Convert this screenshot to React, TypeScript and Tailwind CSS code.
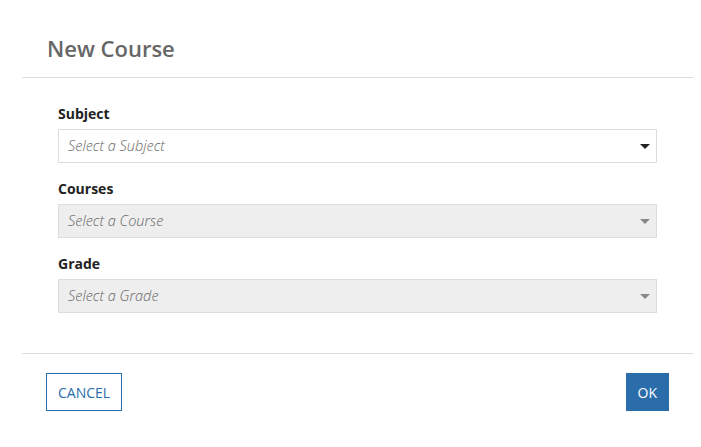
import React from "react";

function Caret({ disabled }: { disabled?: boolean }) {
  return (
    <span
      className={
        "absolute right-[6px] top-[14px] h-0 w-0 border-x-[5px] border-t-[5px] border-x-transparent " +
        (disabled ? "border-t-[#888]" : "border-t-[#222]")
      }
    />
  );
}

function Field({
  label,
  placeholder,
  disabled,
}: {
  label: string;
  placeholder: string;
  disabled?: boolean;
}) {
  return (
    <div>
      <div className="text-[14px] leading-[20px] font-bold text-[#222]">{label}</div>
      <div
        className={
          "relative mt-[5px] h-[34px] border border-[#ddd] pl-[9px] text-[14.5px] leading-[32px] font-light italic text-[#666] " +
          (disabled ? "bg-[#eee]" : "bg-white")
        }
      >
        {placeholder}
        <Caret disabled={disabled} />
      </div>
    </div>
  );
}

export default function App() {
  return (
    <div
      className="min-h-screen bg-white"
      style={{ fontFamily: '"Open Sans", sans-serif' }}
    >
      <div className="ml-[22px] w-[671px]">
        {/* Header */}
        <div className="border-b border-[#ddd] px-[25px] pt-[33px] pb-[14px]">
          <h1 className="text-[22px] leading-[30px] font-semibold text-[#666]">
            New Course
          </h1>
        </div>

        {/* Body */}
        <div className="flex flex-col gap-[16px] border-b border-[#ddd] px-[36px] pt-[26px] pb-[40px]">
          <Field label="Subject" placeholder="Select a Subject" />
          <Field label="Courses" placeholder="Select a Course" disabled />
          <Field label="Grade" placeholder="Select a Grade" disabled />
        </div>

        {/* Footer */}
        <div className="flex items-center justify-between px-[24px] pt-[19px]">
          <button className="h-[38px] border border-[#2b6cab] bg-white px-[11px] text-[14px] font-medium text-[#2b6cab]">
            CANCEL
          </button>
          <button className="h-[38px] border border-[#2b6cab] bg-[#2b6cab] px-[11px] text-[14px] font-medium text-white">
            OK
          </button>
        </div>
      </div>
    </div>
  );
}
